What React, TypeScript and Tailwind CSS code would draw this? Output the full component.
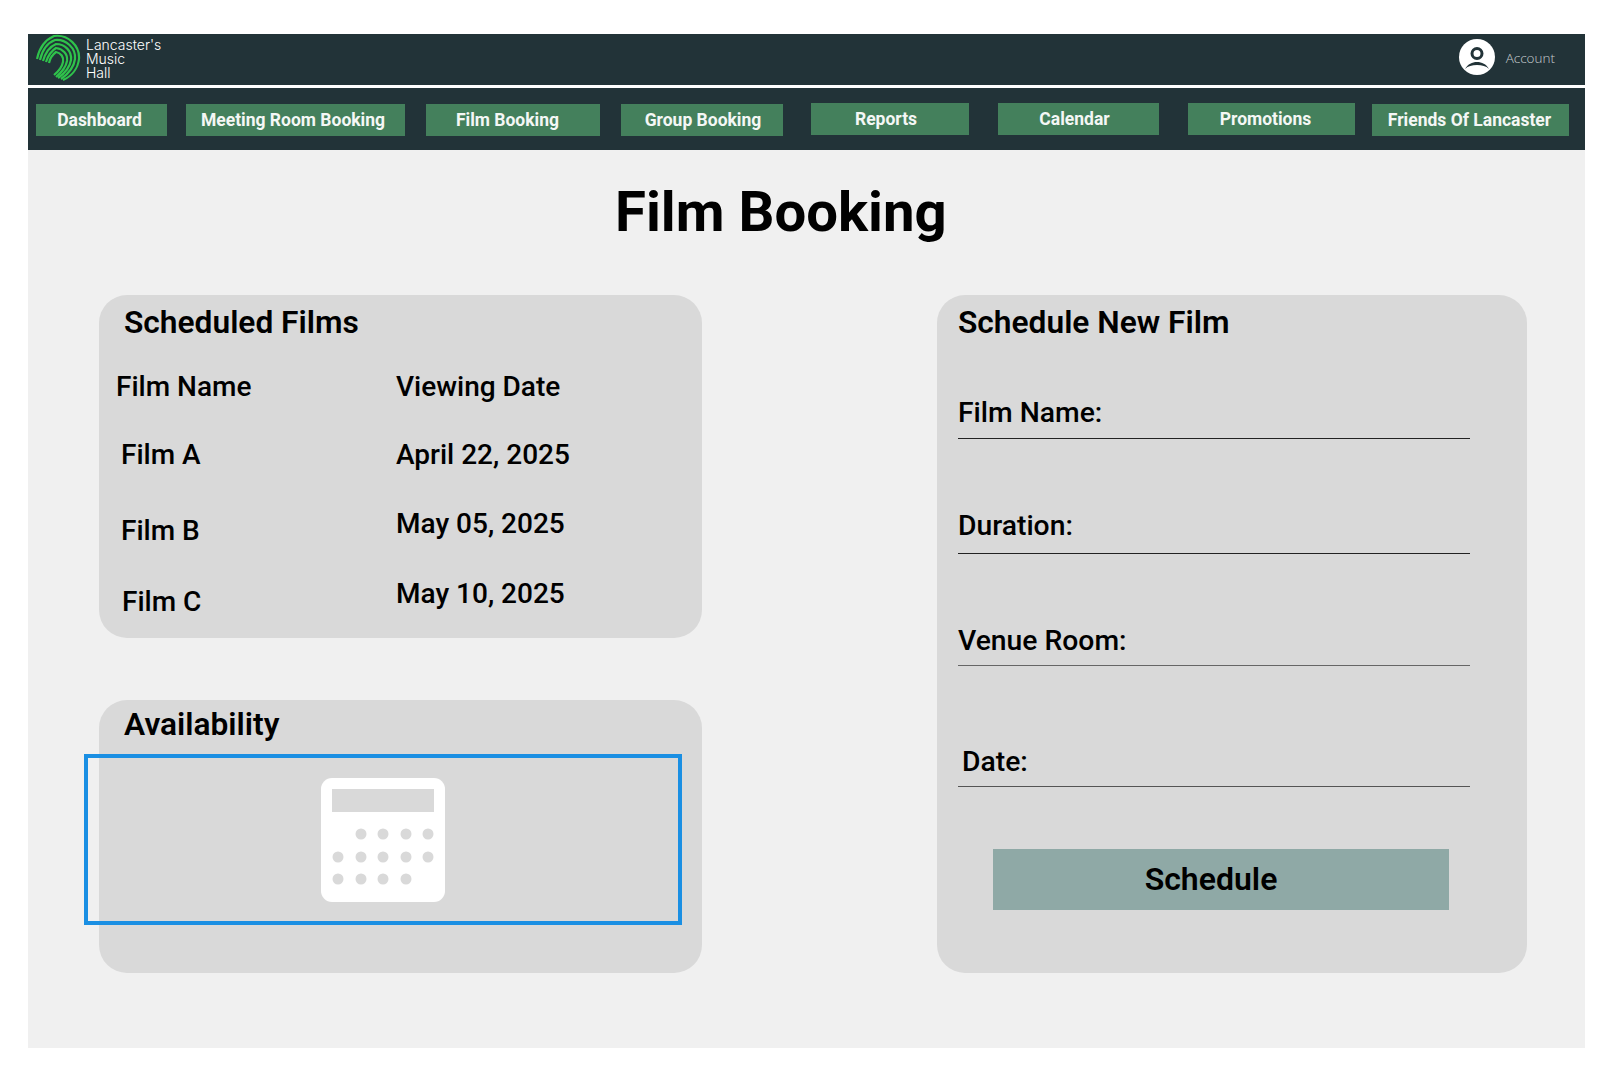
const navItems = [
  { label: "Dashboard", className: "ml-[8px] mt-[16px] w-[131px] pr-[4px]" },
  { label: "Meeting Room Booking", className: "ml-[19px] mt-[16px] w-[219px] pr-[5px]" },
  { label: "Film Booking", className: "ml-[21px] mt-[16px] w-[174px] pr-[11px]" },
  { label: "Group Booking", className: "ml-[21px] mt-[16px] w-[162px] pl-[2px]" },
  { label: "Reports", className: "ml-[28px] mt-[15px] w-[158px] pr-[8px]" },
  { label: "Calendar", className: "ml-[29px] mt-[15px] w-[161px] pr-[8px]" },
  { label: "Promotions", className: "ml-[29px] mt-[15px] w-[167px] pr-[12px]" },
  { label: "Friends Of Lancaster", className: "ml-[17px] mt-[16px] w-[197px] pr-[2px]" },
];

function Logo() {
  return (
    <svg width="46" height="48" viewBox="0 0 46 48" fill="none" stroke="#2fc24b" strokeWidth="2.2" strokeLinecap="butt">
      <path d="M1 25C3 15 9 6 18 2C32 0 44 12 43 25C42 34 36 42 27 46" />
      <path d="M4 26C6 17 11 9 19 6C30 5 40 14 39 25C38 33 32 40 25 45" />
      <path d="M7 27C9 20 13 13 20 10C29 10 36 17 35 26C34 33 29 39 22 44" />
      <path d="M10 28C12 22 15 17 20 14C27 15 32 20 31 27C30 33 26 38 20 43" />
      <path d="M13 29C14 24 16 21 20 18C25 19 28 23 27 28C26 33 23 37 18 41" />
    </svg>
  );
}

function AccountIcon() {
  return (
    <svg width="36" height="36" viewBox="0 0 36 36">
      <circle cx="18" cy="18" r="18" fill="#fff" />
      <circle cx="18" cy="14.5" r="5" fill="none" stroke="#223338" strokeWidth="3" />
      <path d="M6 30C9 25 13 23 18 23C23 23 27 25 30 30C27 27 23 26 18 26C13 26 9 27 6 30Z" fill="#223338" />
    </svg>
  );
}

function CalendarIcon() {
  const rows = [
    { y: 56, xs: [40, 62, 85, 107] },
    { y: 79, xs: [17, 40, 62, 85, 107] },
    { y: 101, xs: [17, 40, 62, 85] },
  ];
  return (
    <svg width="124" height="124" viewBox="0 0 124 124">
      <rect width="124" height="124" rx="11" fill="#fff" />
      <rect x="11" y="11" width="102" height="23" fill="#d9d9d9" />
      {rows.map((row) =>
        row.xs.map((x) => <circle key={`${row.y}-${x}`} cx={x} cy={row.y} r="5.5" fill="#d9d9d9" />)
      )}
    </svg>
  );
}

function FormField({ label, className, lineClass, labelClass }: { label: string; className: string; lineClass: string; labelClass?: string }) {
  return (
    <div className={className}>
      <div className={`h-[36px] text-[28.3px] font-medium leading-[36px] text-black ${labelClass ?? ""}`}>{label}</div>
      <div className={`h-[1px] w-[512px] ${lineClass}`} />
    </div>
  );
}

export default function App() {
  return (
    <div className="h-[1089px] w-[1600px] bg-white pl-[28px] pt-[34px] font-['Roboto',sans-serif]">
      <div className="w-[1557px]">
        <header className="flex h-[51px] items-center justify-between bg-[#223338]">
          <div className="flex items-center">
            <div className="ml-[8px] mt-[-3px]"><Logo /></div>
            <div className="ml-[4px] mt-[-2px] font-['Inter',sans-serif] text-[14px] font-light leading-[14px] text-white">
              Lancaster's<br />Music<br />Hall
            </div>
          </div>
          <div className="mr-[30px] flex items-center gap-[11px]">
            <div className="mb-[6px]"><AccountIcon /></div>
            <span className="mb-[2px] font-['Open_Sans',sans-serif] text-[13.5px] font-light text-[#c4cbcd]">Account</span>
          </div>
        </header>
        <nav className="mt-[3px] flex h-[62px] items-start bg-[#223338]">
          {navItems.map((item) => (
            <a key={item.label} className={`flex h-[32px] items-center justify-center bg-[#44805c] text-[17.5px] font-bold text-[#f4f7f5] ${item.className}`}>
              {item.label}
            </a>
          ))}
        </nav>
        <main className="h-[898px] bg-[#f0f0f0]">
          <h1 className="pl-[587px] pt-[27px] text-[56.3px] font-bold leading-[70px] text-black">Film Booking</h1>
          <div className="mt-[48px] flex pl-[71px]">
            <div className="w-[603px]">
              <section className="h-[343px] rounded-[28px] bg-[#d9d9d9] pt-[10px]">
                <h2 className="pl-[25px] text-[31.7px] font-semibold leading-[36px] text-black">Scheduled Films</h2>
                <div className="mt-[28px] flex text-[28px] font-medium leading-[36px] text-black">
                  <div className="w-[297px] pl-[17px]">
                    <div>Film Name</div>
                    <div className="mt-[32px] pl-[5px]">Film A</div>
                    <div className="mt-[40px] pl-[5px]">Film B</div>
                    <div className="mt-[35px] pl-[6px]">Film C</div>
                  </div>
                  <div>
                    <div>Viewing Date</div>
                    <div className="mt-[32px]">April 22, 2025</div>
                    <div className="mt-[33px]">May 05, 2025</div>
                    <div className="mt-[34px]">May 10, 2025</div>
                  </div>
                </div>
              </section>
              <section className="mt-[62px] h-[273px] rounded-[28px] bg-[#d9d9d9] pt-[7px]">
                <h2 className="pl-[25px] text-[31.7px] font-semibold leading-[36px] text-black">Availability</h2>
                <div className="relative ml-[-15px] mt-[11px] flex h-[171px] w-[598px] justify-center border-[4px] border-[#1a8fe3] pr-[1px] pt-[20px]">
                  <CalendarIcon />
                </div>
              </section>
            </div>
            <section className="ml-[235px] h-[678px] w-[590px] rounded-[28px] bg-[#d9d9d9] pl-[21px] pt-[10px]">
              <h2 className="text-[31.7px] font-semibold leading-[36px] text-black">Schedule New Film</h2>
              <FormField label="Film Name:" className="mt-[54px]" lineClass="mt-[7px] bg-[#222222]" />
              <FormField label="Duration:" className="mt-[69px]" lineClass="mt-[9px] bg-[#222222]" />
              <FormField label="Venue Room:" className="mt-[69px]" lineClass="mt-[6px] bg-[#666666]" />
              <FormField label="Date:" className="mt-[78px]" lineClass="mt-[6px] bg-[#555555]" labelClass="pl-[4px]" />
              <button className="ml-[35px] mt-[62px] h-[61px] w-[456px] bg-[#8fa9a6] pb-[2px] pr-[20px] text-[32px] font-semibold text-black">Schedule</button>
            </section>
          </div>
        </main>
      </div>
    </div>
  );
}
